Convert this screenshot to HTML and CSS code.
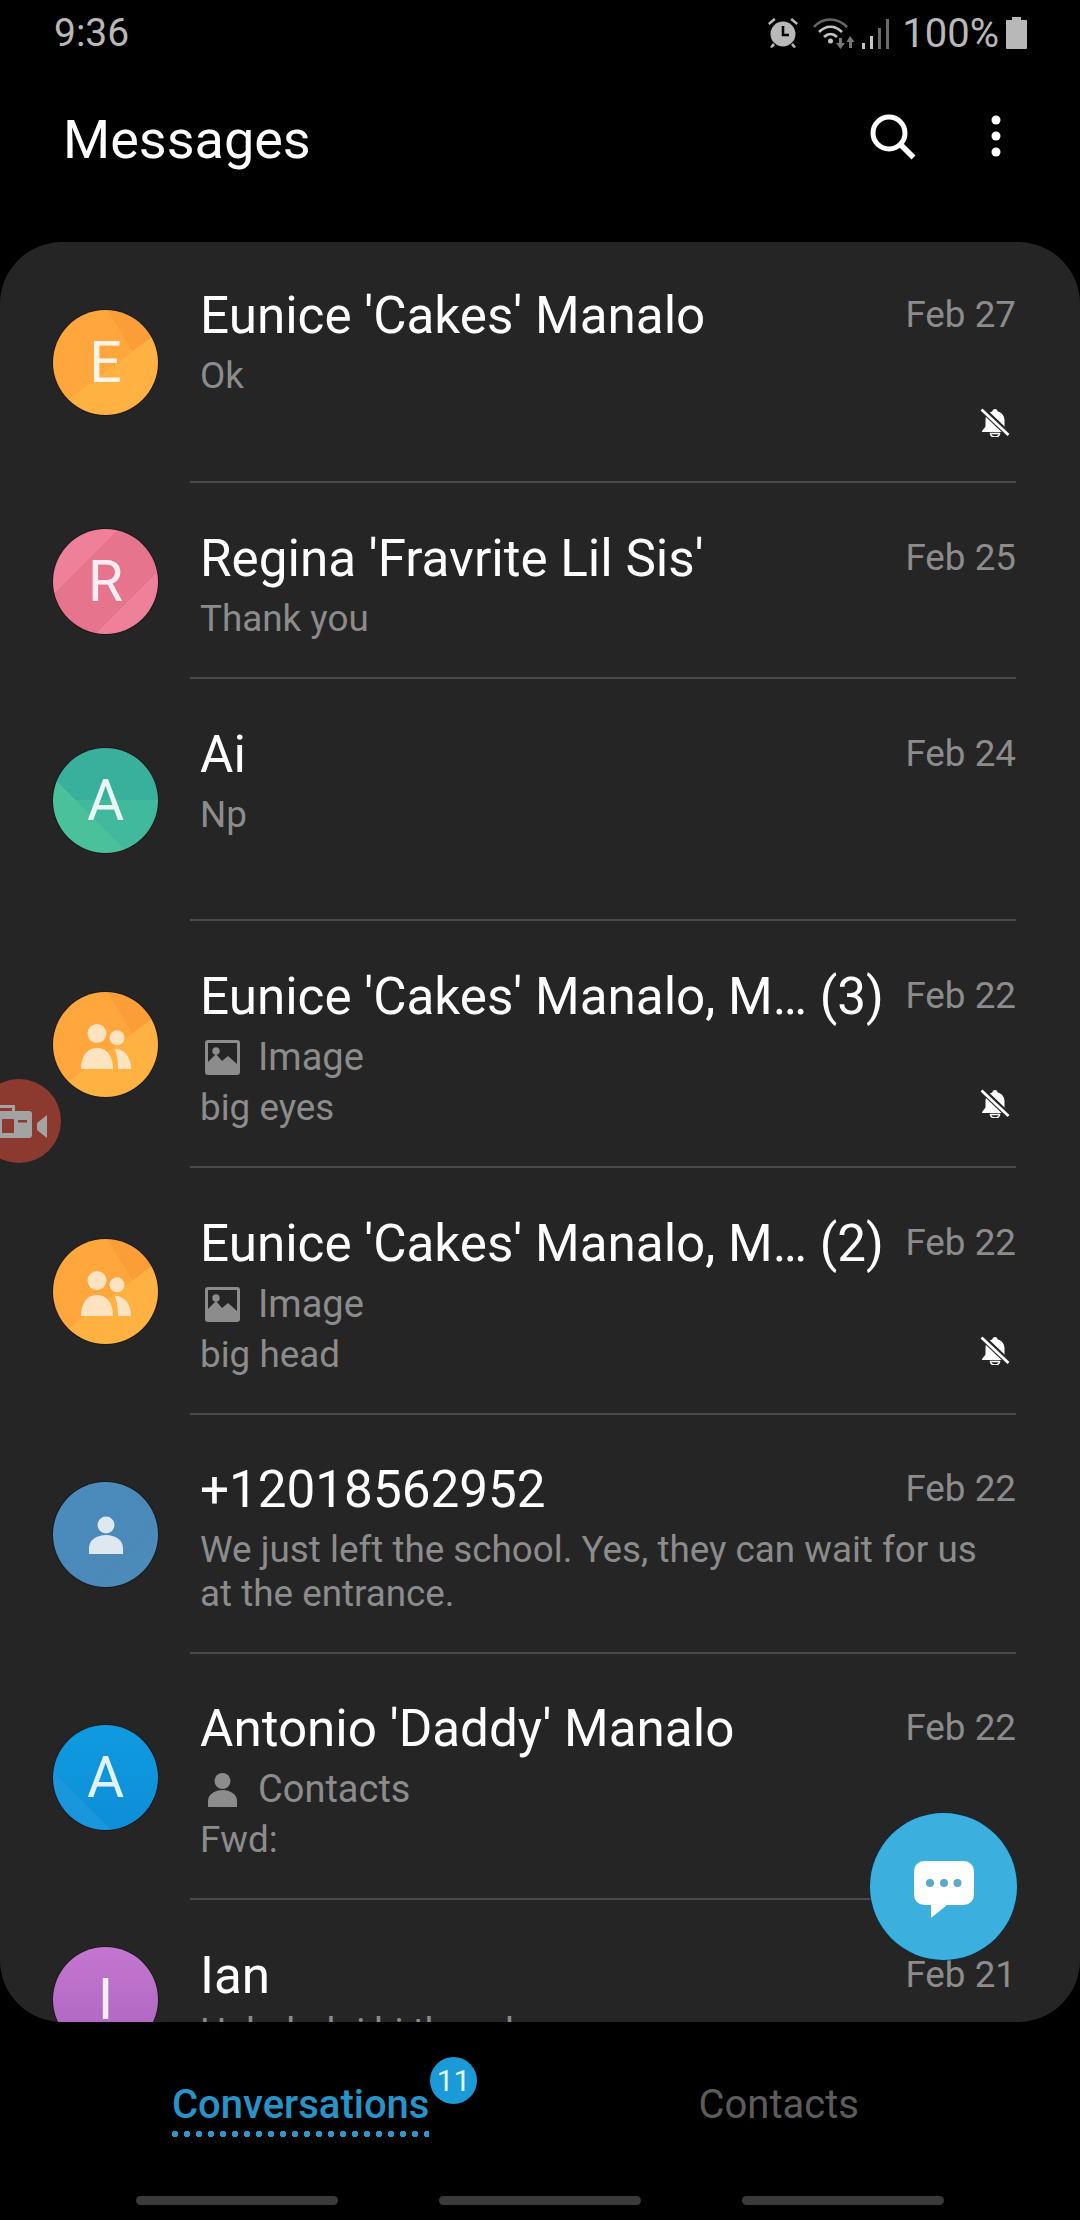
FILE: index.html
```html
<!DOCTYPE html>
<html lang="en">
<head>
<meta charset="utf-8">
<title>Messages</title>
<link rel="stylesheet" href="styles.css">
</head>
<body>
<div class="screen">
  <div class="status">
    <span class="time">9:36</span>
    <div class="status-right">
      <svg class="ic-alarm" viewBox="0 0 32 32"><path d="M1 6 7 1l1.600 2-6 5zM31 6l-6-5-1.600 2 6 5z" fill="#b8b8b8"/><circle cx="16" cy="17" r="12.500" fill="#b8b8b8"/><path d="M16 9v9h6" fill="none" stroke="#000" stroke-width="2.600"/><path d="m6 26-3 4 2 1 3-3zM26 26l3 4-2 1-3-3z" fill="#b8b8b8"/></svg>
      <svg class="ic-wifi" viewBox="0 0 78 32"><g fill="none"><path d="M2 10C11 0 25 0 35 10" stroke="#666" stroke-width="2.600"/><path d="M7 15c7-7 16-7 23 0" stroke="#c4c4c4" stroke-width="2.600"/><path d="M12 20c4-4 9-4 13 0" stroke="#c4c4c4" stroke-width="2.600"/></g><circle cx="18.500" cy="24" r="2.500" fill="#c4c4c4"/><path d="M27 21h3v5h3l-4.500 6-4.500-6h3zM38 19l4.500 6H40v6h-3v-6h-2.500z" fill="#777"/><g fill="#c4c4c4"><rect x="50" y="26" width="3" height="6"/><rect x="58" y="19" width="3" height="13"/></g><g fill="#6a6a6a"><rect x="66" y="11" width="3" height="21"/><rect x="74" y="2" width="3" height="30"/></g></svg>
      <span class="pct">100%</span>
      <svg class="ic-batt" viewBox="0 0 21 32"><path d="M6 0h9v3h5a1 1 0 0 1 1 1v27a1 1 0 0 1-1 1H1a1 1 0 0 1-1-1V4a1 1 0 0 1 1-1h5z" fill="#b8b8b8"/></svg>
    </div>
  </div>

  <header class="topbar">
    <h1 class="title">Messages</h1>
    <div class="actions">
      <svg class="ic-search" viewBox="0 0 46 46"><circle cx="19" cy="19" r="16" fill="none" stroke="#fff" stroke-width="5"/><path d="m30.500 30.500 13 13" stroke="#fff" stroke-width="5.500" fill="none"/></svg>
      <svg class="ic-more" viewBox="0 0 10 42"><circle cx="5" cy="5" r="4.500" fill="#fff"/><circle cx="5" cy="21" r="4.500" fill="#fff"/><circle cx="5" cy="37" r="4.500" fill="#fff"/></svg>
    </div>
  </header>

  <main class="card">
    <article class="row row-first">
      <div class="avatar av-orange">E</div>
      <div class="main tall">
        <div class="head"><span class="name">Eunice 'Cakes' Manalo</span><span class="date">Feb 27</span></div>
        <div class="foot"><div class="lines"><div class="line">Ok</div></div>
          <svg class="ic-bell" viewBox="0 0 30 30"><use href="#bell"/></svg></div>
      </div>
    </article>

    <article class="row">
      <div class="avatar av-pink">R</div>
      <div class="main">
        <div class="head"><span class="name">Regina 'Fravrite Lil Sis'</span><span class="date">Feb 25</span></div>
        <div class="foot"><div class="lines"><div class="line">Thank you</div></div></div>
      </div>
    </article>

    <article class="row">
      <div class="avatar av-green">A</div>
      <div class="main tall">
        <div class="head"><span class="name">Ai</span><span class="date">Feb 24</span></div>
        <div class="foot"><div class="lines"><div class="line">Np</div></div></div>
      </div>
    </article>

    <article class="row">
      <div class="avatar av-orange"><svg class="ic-group" viewBox="0 0 50 45"><use href="#group"/></svg></div>
      <div class="main">
        <div class="head"><span class="name">Eunice 'Cakes' Manalo, M… (3)</span><span class="date">Feb 22</span></div>
        <div class="foot"><div class="lines">
          <div class="line attach"><svg class="ic-image" viewBox="0 0 35 35"><use href="#image"/></svg>Image</div>
          <div class="line">big eyes</div></div>
          <svg class="ic-bell" viewBox="0 0 30 30"><use href="#bell"/></svg></div>
      </div>
    </article>

    <article class="row">
      <div class="avatar av-orange"><svg class="ic-group" viewBox="0 0 50 45"><use href="#group"/></svg></div>
      <div class="main">
        <div class="head"><span class="name">Eunice 'Cakes' Manalo, M… (2)</span><span class="date">Feb 22</span></div>
        <div class="foot"><div class="lines">
          <div class="line attach"><svg class="ic-image" viewBox="0 0 35 35"><use href="#image"/></svg>Image</div>
          <div class="line">big head</div></div>
          <svg class="ic-bell" viewBox="0 0 30 30"><use href="#bell"/></svg></div>
      </div>
    </article>

    <article class="row row-tight">
      <div class="avatar av-steel"><svg class="ic-person" viewBox="0 0 34 38"><circle cx="17" cy="9" r="8.500" fill="#dfe8f0"/><path d="M0 38v-6c0-8 8-13 17-13s17 5 17 13v6z" fill="#dfe8f0"/></svg></div>
      <div class="main">
        <div class="head"><span class="name">+12018562952</span><span class="date">Feb 22</span></div>
        <div class="foot"><div class="lines"><div class="line">We just left the school. Yes, they can wait for us</div><div class="line">at the entrance.</div></div></div>
      </div>
    </article>

    <article class="row row-tight">
      <div class="avatar av-blue">A</div>
      <div class="main">
        <div class="head"><span class="name">Antonio 'Daddy' Manalo</span><span class="date">Feb 22</span></div>
        <div class="foot"><div class="lines">
          <div class="line attach"><svg class="ic-image" viewBox="0 0 35 35"><circle cx="17.500" cy="9" r="8" fill="#8c8c8c"/><path d="M3 35v-6c0-7 7-11 14.500-11S32 22 32 29v6z" fill="#8c8c8c"/></svg>Contacts</div>
          <div class="line">Fwd:</div></div></div>
      </div>
    </article>

    <article class="row row-last">
      <div class="avatar av-purple">I</div>
      <div class="main">
        <div class="head"><span class="name">Ian</span><span class="date">Feb 21</span></div>
        <div class="foot"><div class="lines"><div class="line">Hahahah i hi there ha</div></div></div>
      </div>
    </article>

    <button class="fab" type="button" aria-label="Compose">
      <svg class="ic-chat" viewBox="0 0 60 58"><path d="M10 0h40a10 10 0 0 1 10 10v24a10 10 0 0 1-10 10H33L17 57V44h-7A10 10 0 0 1 0 34V10A10 10 0 0 1 10 0z" fill="#fff"/><circle cx="16" cy="22" r="4" fill="#5aa9c9"/><circle cx="30" cy="22" r="4" fill="#5aa9c9"/><circle cx="43.500" cy="22" r="4" fill="#5aa9c9"/></svg>
    </button>
  </main>

  <nav class="tabs">
    <div class="tab tab-active">Conversations<span class="badge">11</span></div>
    <div class="tab">Contacts</div>
  </nav>

  <div class="softkeys"><span class="softkey"></span><span class="softkey"></span><span class="softkey"></span></div>

  <div class="recorder">
    <svg class="ic-rec" viewBox="0 0 60 34"><path d="M6 1h17v7h-3V4H6z" fill="#a3a3a3"/><path d="M0 7h37a3 3 0 0 1 3 3v21a3 3 0 0 1-3 3H0z" fill="#a3a3a3"/><rect x="10" y="15" width="12" height="14" fill="#8c3a2f"/><rect x="26" y="16" width="9" height="2.500" fill="#8c3a2f"/><path d="M45 19 55 11v23l-10-8z" fill="#a3a3a3"/></svg>
  </div>
</div>

<svg class="defs" aria-hidden="true">
  <defs>
    <g id="bell"><path d="M15 2c1.500 0 2.500 1 2.700 2.500C22 5.500 24.500 9 24.500 13.500v6l3.500 4.500v1H2v-1l3.500-4.500v-6C5.500 9 8 5.500 12.300 4.500 12.500 3 13.500 2 15 2z" fill="#fff"/><path d="M10.500 26.500a4.500 3.500 0 0 0 9 0z" fill="none" stroke="#fff" stroke-width="1.600"/><path d="M2 2 29 28" stroke="#252525" stroke-width="6"/><path d="M1.500 2.500 28.500 28" stroke="#fff" stroke-width="2.800"/></g>
    <g id="group"><circle cx="16" cy="9.500" r="9.500" fill="#fde3c0"/><circle cx="36" cy="13.700" r="7.500" fill="#fde3c0"/><path d="M0 45c0-13 6-21 16-21s16 8 16 21z" fill="#fde3c0"/><path d="M34 25c10 0 16 8 16 20H37c0-8-1-14-3-20z" fill="#fde3c0"/></g>
    <g id="image"><path fill-rule="evenodd" d="M3 0h29a3 3 0 0 1 3 3v29a3 3 0 0 1-3 3H3a3 3 0 0 1-3-3V3a3 3 0 0 1 3-3zm0 3v19l8-8 6 7 6-5 9 8V3z" fill="#8c8c8c"/><circle cx="11" cy="11" r="3.700" fill="#8c8c8c"/></g>
  </defs>
</svg>
</body>
</html>
```
FILE: styles.css
```css
* { box-sizing: border-box; margin: 0; padding: 0; }
html, body { background: #000; }
body { font-family: Roboto, "Noto Sans", sans-serif; color: #fff; }

.screen {
  position: relative;
  display: flex;
  flex-direction: column;
  width: 1080px;
  height: 2220px;
  overflow: hidden;
  background: #000;
}

/* status bar */
.status {
  flex: none;
  display: flex;
  justify-content: space-between;
  align-items: center;
  height: 66px;
  padding: 0 53px 0 54px;
  color: #b8b8b8;
  font-size: 39px;
}
.status-right { display: flex; align-items: center; }
.ic-alarm { width: 32px; height: 32px; }
.ic-wifi { width: 78px; height: 32px; margin-left: 13px; }
.pct { margin-left: 12px; font-size: 40px; }
.ic-batt { width: 21px; height: 32px; margin-left: 7px; }

/* header */
.topbar {
  flex: none;
  display: flex;
  justify-content: space-between;
  height: 176px;
  padding: 44px 79px 0 63px;
}
.title { font-size: 54px; font-weight: 400; line-height: 60px; }
.actions { display: flex; align-items: flex-start; }
.ic-search { width: 46px; height: 46px; margin-top: 4px; }
.ic-more { width: 10px; height: 42px; margin: 5px 0 0 75px; }

/* card */
.card {
  position: relative;
  flex: none;
  height: 1780px;
  overflow: hidden;
  background: #252525;
  border-radius: 62px;
}
.row { display: flex; padding: 0 64px 0 53px; }
.avatar {
  flex: none;
  align-self: center;
  display: flex;
  align-items: center;
  justify-content: center;
  width: 105px;
  height: 105px;
  border-radius: 50%;
  box-shadow: 0 0 0 1px rgba(0, 0, 0, .3);
  color: rgba(255, 255, 255, .88);
  font-size: 57px;
  font-weight: 400;
}
.av-orange { background: linear-gradient(143deg, transparent 0 55%, #ffb142 55%), linear-gradient(59deg, #ffa63c 0 70%, #fb9e37 70%); }
.av-pink { background: linear-gradient(135deg, #ee8199 0 31%, transparent 31%), linear-gradient(135deg, transparent 0 70%, #ee8199 70%), #e5748c; }
.av-green { background: linear-gradient(225deg, transparent 0 64%, #4ac19b 64%), linear-gradient(180deg, #38b09c 0 50%, #40b99c 50%); }
.av-steel { background: linear-gradient(135deg, #4b8cbe, #4a89b8 70%, #4f90c0); }
.av-blue { background: linear-gradient(45deg, #1a96dc 0 28%, transparent 28%), linear-gradient(180deg, #0f9be0, #0e8ed6); }
.av-purple { background: linear-gradient(180deg, #c476cf, #ab65c0); }

.main {
  flex: 1;
  min-width: 0;
  display: flex;
  flex-direction: column;
  margin-left: 32px;
  padding: 43px 0 36px 10px;
  border-bottom: 2px solid #4a4a4a;
}
.row-first .main { padding-top: 41px; }
.row-first .main.tall { min-height: 241px; }
.row-tight .main { padding-top: 42px; }
.row-last .main { padding-bottom: 42px; }
.main.tall { min-height: 242px; }
.head { display: flex; justify-content: space-between; align-items: flex-start; margin-bottom: 5px; }
.row-last .head { margin-bottom: 1px; }
.foot { flex: 1; display: flex; justify-content: space-between; }
.name { font-size: 51.200px; line-height: 66px; white-space: nowrap; }
.line { color: #8c8c8c; font-size: 36.800px; line-height: 44px; white-space: nowrap; }
.attach { display: flex; align-items: center; gap: 18px; margin-bottom: 7px; font-size: 38px; }
.ic-image { width: 35px; height: 35px; margin-left: 5px; }
.date { color: #8c8c8c; font-size: 36.800px; line-height: 44px; margin-top: 10px; white-space: nowrap; }
.ic-bell { flex: none; align-self: flex-end; width: 30px; height: 30px; margin: 0 6px 12px 0; }
.row-first .ic-bell { margin-bottom: 8px; }
.ic-group { width: 50px; height: 45px; margin-top: 3px; }
.ic-person { width: 34px; height: 38px; }

.fab {
  position: absolute;
  top: 1571px;
  right: 63px;
  display: flex;
  align-items: center;
  justify-content: center;
  width: 147px;
  height: 147px;
  border: 0;
  border-radius: 50%;
  background: #3bb0de;
  box-shadow: 0 0 0 1px rgba(0, 50, 80, .6);
}
.ic-chat { width: 60px; height: 58px; margin-top: 7px; }

/* tabs */
.tabs { flex: none; display: flex; gap: 269px; padding: 58px 0 0 172px; }
.tab { position: relative; color: #5c5c5c; font-size: 40px; line-height: 50px; }
.tab-active {
  padding-bottom: 7px;
  color: #2794c9;
  font-weight: 500;
  background: radial-gradient(circle at 3px 3px, #2e97c8 0 3px, transparent 3.500px) 0 100% / 12px 6px repeat-x;
}
.badge {
  position: absolute;
  left: 258px;
  top: -23px;
  width: 47px;
  height: 47px;
  border-radius: 50%;
  background: #1a9ad6;
  color: #e6f6fd;
  font-size: 30px;
  font-weight: 400;
  line-height: 47px;
  text-align: center;
}

.softkeys { flex: none; display: flex; gap: 101px; margin-top: 59px; padding-left: 136px; }
.softkey { width: 202px; height: 9px; border-radius: 5px; background: #3a3a3a; }

/* floating recorder */
.recorder {
  position: absolute;
  left: -23px;
  top: 1079px;
  display: flex;
  align-items: center;
  justify-content: flex-end;
  width: 84px;
  height: 84px;
  padding-right: 9px;
  border-radius: 50%;
  background: #8c3a2f;
}
.ic-rec { flex: none; width: 60px; height: 34px; }
.defs { position: absolute; width: 0; height: 0; }
```
